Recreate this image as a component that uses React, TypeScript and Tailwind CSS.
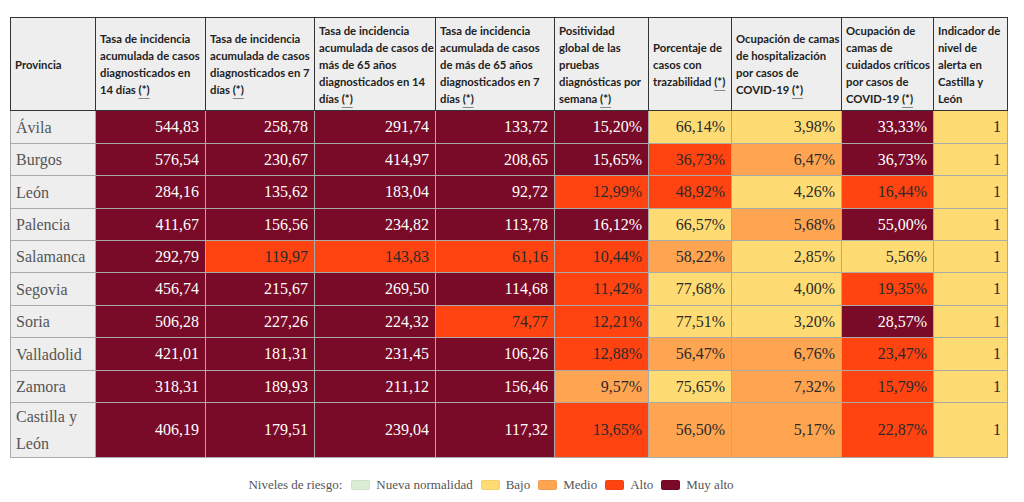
type Level = 'd' | 'r' | 'o' | 'y';

const levelClass: Record<Level, string> = {
  d: 'bg-[#790a28] text-white',
  r: 'bg-[#ff4412] text-[#2a2a2a]',
  o: 'bg-[#ffa552] text-[#2a2a2a]',
  y: 'bg-[#ffdc73] text-[#2a2a2a]',
};

const headers: { label: string; note: boolean; cls: string }[] = [
  { label: 'Tasa de incidencia acumulada de casos diagnosticados en 14 días', note: true, cls: 'w-[110px] pr-[1px]' },
  { label: 'Tasa de incidencia acumulada de casos diagnosticados en 7 días', note: true, cls: 'w-[109px] pr-[1px]' },
  { label: 'Tasa de incidencia acumulada de casos de más de 65 años diagnosticados en 14 días', note: true, cls: 'w-[121px] pr-[1px]' },
  { label: 'Tasa de incidencia acumulada de casos de más de 65 años diagnosticados en 7 días', note: true, cls: 'w-[119px] pr-[8px]' },
  { label: 'Positividad global de las pruebas diagnósticas por semana', note: true, cls: 'w-[94px] pr-[1px]' },
  { label: 'Porcentaje de casos con trazabilidad', note: true, cls: 'w-[83px] pr-[1px]' },
  { label: 'Ocupación de camas de hospitalización por casos de COVID-19', note: true, cls: 'w-[110px] pr-[1px]' },
  { label: 'Ocupación de camas de cuidados críticos por casos de COVID-19', note: true, cls: 'w-[92px] pr-[1px]' },
  { label: 'Indicador de nivel de alerta en Castilla y León', note: false, cls: 'w-[74px] pr-[1px]' },
];

// row heights follow the reference grid lines (alternating 33/32px)
const rows: { name: string; h: string; cells: [string, Level][] }[] = [
  { name: 'Ávila', h: 'h-[33px]', cells: [['544,83', 'd'], ['258,78', 'd'], ['291,74', 'd'], ['133,72', 'd'], ['15,20%', 'd'], ['66,14%', 'y'], ['3,98%', 'y'], ['33,33%', 'd'], ['1', 'y']] },
  { name: 'Burgos', h: 'h-[32px]', cells: [['576,54', 'd'], ['230,67', 'd'], ['414,97', 'd'], ['208,65', 'd'], ['15,65%', 'd'], ['36,73%', 'r'], ['6,47%', 'o'], ['36,73%', 'd'], ['1', 'y']] },
  { name: 'León', h: 'h-[33px]', cells: [['284,16', 'd'], ['135,62', 'd'], ['183,04', 'd'], ['92,72', 'd'], ['12,99%', 'r'], ['48,92%', 'r'], ['4,26%', 'y'], ['16,44%', 'r'], ['1', 'y']] },
  { name: 'Palencia', h: 'h-[32px]', cells: [['411,67', 'd'], ['156,56', 'd'], ['234,82', 'd'], ['113,78', 'd'], ['16,12%', 'd'], ['66,57%', 'y'], ['5,68%', 'o'], ['55,00%', 'd'], ['1', 'y']] },
  { name: 'Salamanca', h: 'h-[32px]', cells: [['292,79', 'd'], ['119,97', 'r'], ['143,83', 'r'], ['61,16', 'r'], ['10,44%', 'r'], ['58,22%', 'o'], ['2,85%', 'y'], ['5,56%', 'y'], ['1', 'y']] },
  { name: 'Segovia', h: 'h-[33px]', cells: [['456,74', 'd'], ['215,67', 'd'], ['269,50', 'd'], ['114,68', 'd'], ['11,42%', 'r'], ['77,68%', 'y'], ['4,00%', 'y'], ['19,35%', 'r'], ['1', 'y']] },
  { name: 'Soria', h: 'h-[32px]', cells: [['506,28', 'd'], ['227,26', 'd'], ['224,32', 'd'], ['74,77', 'r'], ['12,21%', 'r'], ['77,51%', 'y'], ['3,20%', 'y'], ['28,57%', 'd'], ['1', 'y']] },
  { name: 'Valladolid', h: 'h-[33px]', cells: [['421,01', 'd'], ['181,31', 'd'], ['231,45', 'd'], ['106,26', 'd'], ['12,88%', 'r'], ['56,47%', 'o'], ['6,76%', 'o'], ['23,47%', 'r'], ['1', 'y']] },
  { name: 'Zamora', h: 'h-[32px]', cells: [['318,31', 'd'], ['189,93', 'd'], ['211,12', 'd'], ['156,46', 'd'], ['9,57%', 'o'], ['75,65%', 'y'], ['7,32%', 'o'], ['15,79%', 'r'], ['1', 'y']] },
  { name: 'Castilla y León', h: 'h-[54px]', cells: [['406,19', 'd'], ['179,51', 'd'], ['239,04', 'd'], ['117,32', 'd'], ['13,65%', 'r'], ['56,50%', 'o'], ['5,17%', 'o'], ['22,87%', 'r'], ['1', 'y']] },
];

const legend = [
  { label: 'Nueva normalidad', color: 'bg-[#dcedd6]' },
  { label: 'Bajo', color: 'bg-[#ffdc73]' },
  { label: 'Medio', color: 'bg-[#ffa552]' },
  { label: 'Alto', color: 'bg-[#ff4412]' },
  { label: 'Muy alto', color: 'bg-[#790a28]' },
];

export default function App() {
  return (
    <div className="min-h-screen bg-white pl-[10px] pt-[17px]">
      <table className="table-fixed border-collapse">
        <thead>
          <tr className="h-[93px]">
            <th className="w-[85px] border border-[#333] bg-[#eeeeee] px-[4px] text-left align-middle font-['Lato','Open_Sans',sans-serif] text-[11.3px] font-bold leading-[17px] text-[#222]">
              Provincia
            </th>
            {headers.map((h, i) => (
              <th key={i} className={`${h.cls} border border-[#333] bg-[#eeeeee] py-[3px] pl-[4px] text-left align-middle font-['Lato','Open_Sans',sans-serif] text-[11.3px] font-bold leading-[17px] text-[#222]`}>
                {h.label}
                {h.note && (
                  <>
                    {' '}
                    <span className="underline decoration-[#888] underline-offset-[4px]">(*)</span>
                  </>
                )}
              </th>
            ))}
          </tr>
        </thead>
        <tbody>
          {rows.map((row) => (
            <tr key={row.name} className={row.h}>
              <td className="border border-[#aaa] bg-[#eeeeee] px-[5px] text-left align-middle font-['Liberation_Serif','DejaVu_Serif',serif] text-[16px] leading-[27px] text-[#555]">
                {row.name}
              </td>
              {row.cells.map(([v, l], i) => (
                <td key={i} className={`border border-[#aaa] pr-[6px] text-right align-middle font-['Liberation_Serif','DejaVu_Serif',serif] text-[16px] leading-[20px] ${levelClass[l]}`}>
                  {v}
                </td>
              ))}
            </tr>
          ))}
        </tbody>
      </table>

      <div className="mt-[17px] flex items-center justify-center pr-[44px] font-['Liberation_Serif','DejaVu_Serif',serif] text-[13px] text-[#555]">
        <span className="mr-[9px]">Niveles de riesgo:</span>
        {legend.map((item) => (
          <span key={item.label} className="mr-[8px] flex items-center">
            <span className={`mr-[6px] inline-block h-[10px] w-[19px] rounded-[2px] border border-black/5 ${item.color}`} />
            {item.label}
          </span>
        ))}
      </div>
    </div>
  );
}
